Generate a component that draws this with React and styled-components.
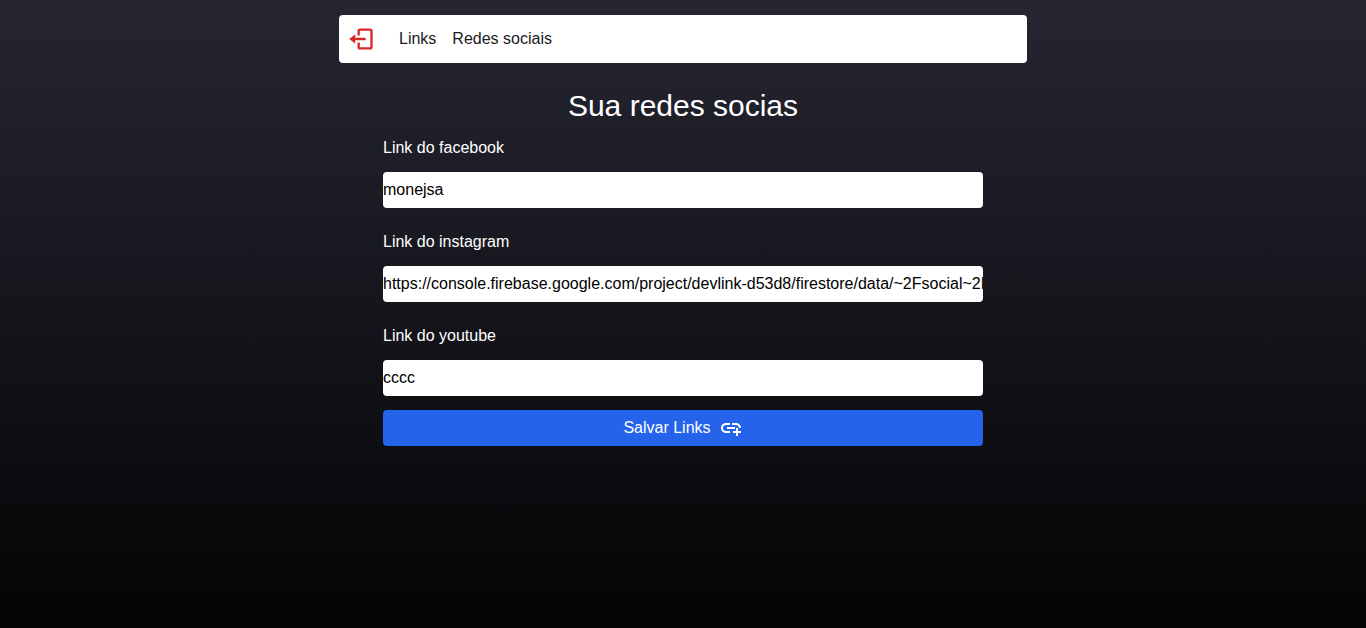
import React from 'react';
import styled, { createGlobalStyle } from 'styled-components';
import { BiLogOut } from 'react-icons/bi';
import { MdAddLink } from 'react-icons/md';

const GlobalStyle = createGlobalStyle`
  *, *::before, *::after { box-sizing: border-box; }
  body {
    margin: 0;
    min-height: 100vh;
    font-family: "Liberation Sans", Arial, sans-serif;
    font-size: 16px;
    line-height: 24px;
    background: linear-gradient(180deg, #252632 0%, #040405 100%);
  }
`;

const Page = styled.main`
  display: flex;
  flex-direction: column;
  align-items: center;
  min-height: 100vh;
  padding: 15px 8px 28px;
`;

const Header = styled.header`
  width: 100%;
  max-width: 688px;
`;

const Nav = styled.nav`
  display: flex;
  align-items: center;
  gap: 16px;
  height: 48px;
  padding: 0 8px;
  border-radius: 4px;
  background: #fff;
`;

const LogoutButton = styled.button`
  display: flex;
  margin-right: 8px;
  padding: 0;
  border: 0;
  background: transparent;
  color: #db2629;
  cursor: pointer;
`;

const NavLink = styled.a`
  color: #1a1a24;
  text-decoration: none;
`;

const Title = styled.h1`
  margin: 25px 0 8px;
  font-size: 30px;
  font-weight: 400;
  line-height: 36px;
  color: #fff;
`;

const Form = styled.form`
  display: flex;
  flex-direction: column;
  width: 100%;
  max-width: 600px;
`;

const Label = styled.label`
  margin: 4px 0 12px;
  color: #fff;
`;

const Input = styled.input`
  width: 100%;
  height: 36px;
  margin-bottom: ${({ $last }) => ($last ? '14px' : '18px')};
  padding: 0;
  border: 0;
  border-radius: 4px;
  outline: none;
  background: #fff;
  color: #000;
  font: inherit;
`;

const SaveButton = styled.button`
  display: flex;
  align-items: center;
  justify-content: center;
  gap: 8px;
  height: 36px;
  padding: 0;
  border: 0;
  border-radius: 4px;
  background: #2563eb;
  color: #fff;
  font: inherit;
  cursor: pointer;
`;

const fields = [
  { id: 'facebook', label: 'Link do facebook', value: 'monejsa' },
  {
    id: 'instagram',
    label: 'Link do instagram',
    value: 'https://console.firebase.google.com/project/devlink-d53d8/firestore/data/~2Fsocial~2Flink',
  },
  { id: 'youtube', label: 'Link do youtube', value: 'cccc' },
];

export default function App() {
  return (
    <>
      <GlobalStyle />
      <Page>
        <Header>
          <Nav>
            <LogoutButton type="button" aria-label="Sair">
              <BiLogOut size={28} />
            </LogoutButton>
            <NavLink href="#links">Links</NavLink>
            <NavLink href="#social">Redes sociais</NavLink>
          </Nav>
        </Header>
        <Title>Sua redes socias</Title>
        <Form onSubmit={(event) => event.preventDefault()}>
          {fields.map(({ id, label, value }, index) => (
            <React.Fragment key={id}>
              <Label htmlFor={id}>{label}</Label>
              <Input id={id} type="text" defaultValue={value} $last={index === fields.length - 1} />
            </React.Fragment>
          ))}
          <SaveButton type="submit">
            Salvar Links
            <MdAddLink size={24} />
          </SaveButton>
        </Form>
      </Page>
    </>
  );
}
